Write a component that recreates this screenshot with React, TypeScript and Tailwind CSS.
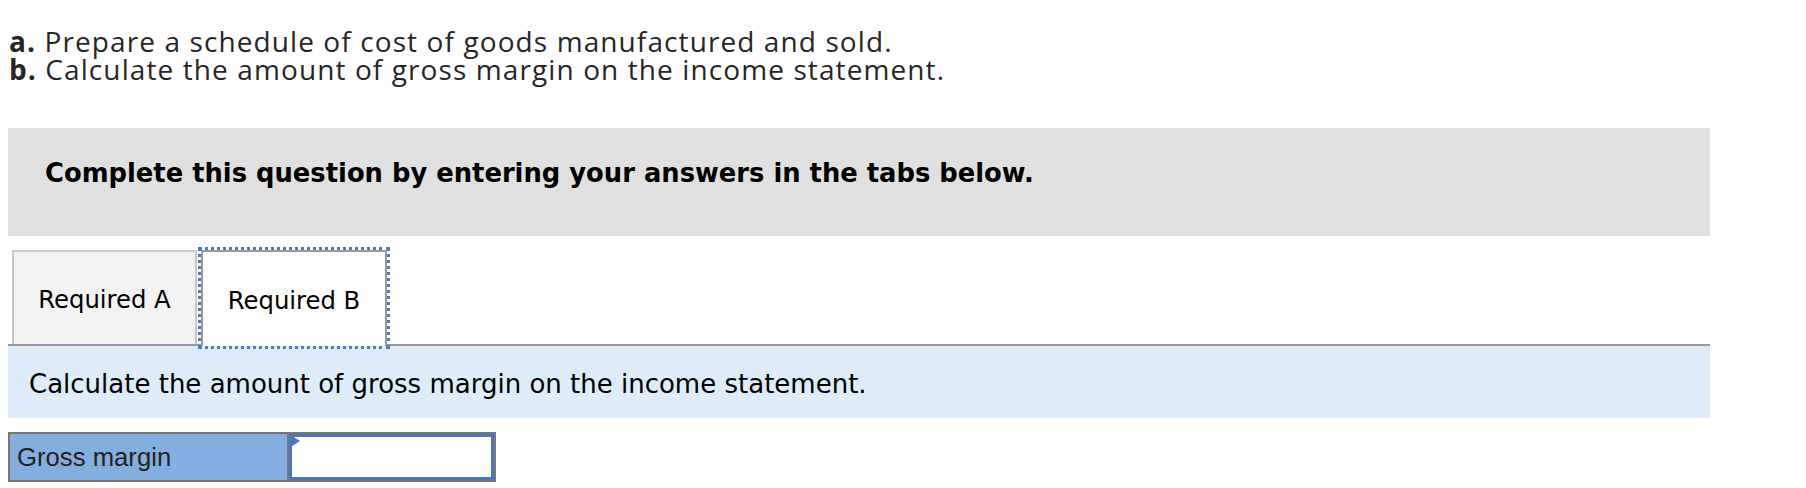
export default function App() {
  return (
    <div className="min-h-[488px] w-[1806px] bg-white">
      <div className="pl-[9px] pt-[27px] text-[28px] leading-[28px] tracking-[1.1px] text-[#262626]" style={{ fontFamily: "'Open Sans', Lato, sans-serif" }}>
        <p>
          <span className="font-bold">a.</span> Prepare a schedule of cost of goods manufactured and sold.
        </p>
        <p>
          <span className="font-bold">b.</span> Calculate the amount of gross margin on the income statement.
        </p>
      </div>

      <div className="ml-2 w-[1702px]" style={{ fontFamily: "'DejaVu Sans', Verdana, sans-serif" }}>
        <div className="mt-[45px] flex h-[108px] items-start bg-[#e0e0e0] pl-[37px] pt-[29px]">
          <h2 className="text-[25.8px] font-bold leading-[32px] text-black">Complete this question by entering your answers in the tabs below.</h2>
        </div>

        <div className="mt-[14px] flex border-b-2 border-[#999] pl-[4px]">
          <button className="flex h-[94px] w-[185px] items-center justify-center border-x-2 border-t-2 border-[#c8c8c8] bg-[#f2f2f2] pt-1 text-[24.3px] text-black">
            Required A
          </button>
          <button className="relative -mb-[2px] ml-[4px] flex h-[96px] w-[186px] items-center justify-center border-x-2 border-t-2 border-[#999] bg-white pt-1 text-[24.3px] text-black outline-[3px] outline-offset-0 outline-dotted outline-[#4a7ebb]">
            Required B
          </button>
        </div>

        <div className="flex h-[72px] items-center bg-[#ddecf8] pl-[21px] pt-[4px] text-[26px] text-black">
          Calculate the amount of gross margin on the income statement.
        </div>

        <div className="mt-[14px] flex h-[50px] w-[488px] border-2 border-[#777]">
          <div className="flex w-[277px] items-center bg-[#84aee0] pl-[7px] text-[25.7px] text-[#222]" style={{ fontFamily: "'Liberation Sans', Arial, sans-serif" }}>
            Gross margin
          </div>
          <div className="relative flex-1 border-l-2 border-[#777]">
            <input className="h-full w-full border-[3px] border-[#4876b8] bg-white outline-none" />
            <svg className="absolute left-0 top-0" width="12" height="14" viewBox="0 0 12 14">
              <polygon points="0,0 11,7 0,14" fill="#4876b8" />
            </svg>
          </div>
        </div>
      </div>
    </div>
  );
}
